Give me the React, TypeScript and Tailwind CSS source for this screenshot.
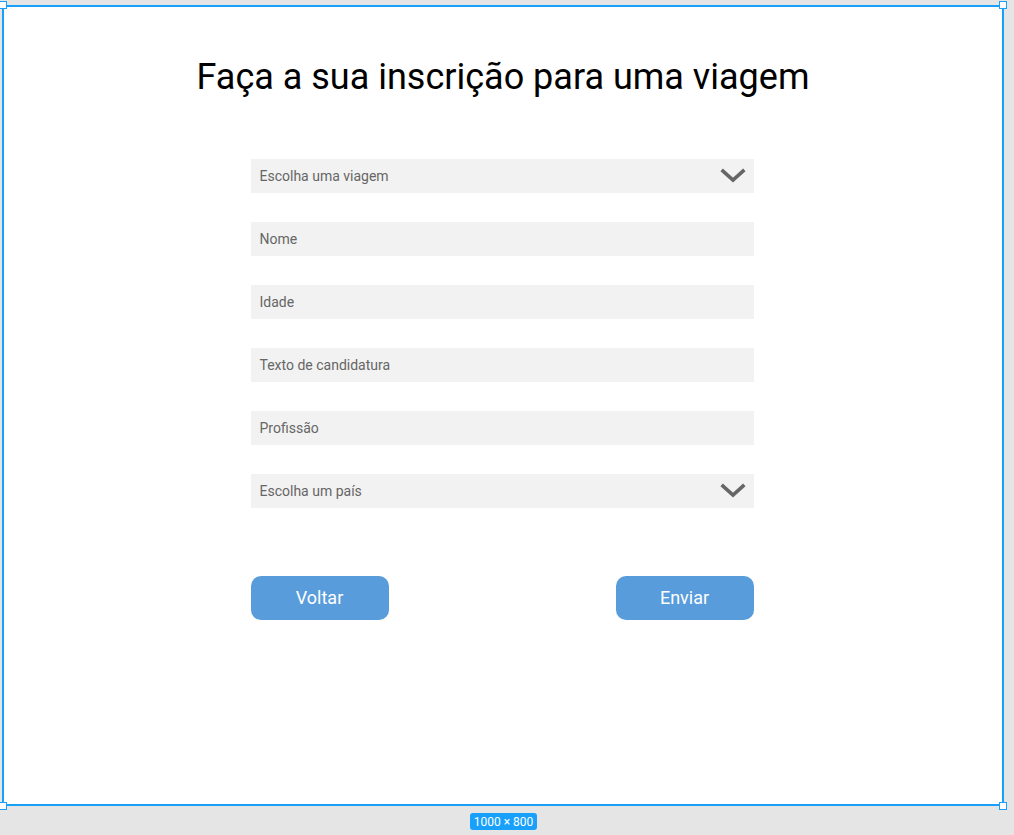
const font = { fontFamily: 'Roboto, "Liberation Sans", sans-serif' }

function Chevron() {
  return (
    <svg width="26" height="16" viewBox="0 0 26 16" className="shrink-0">
      <path d="M3 3 L13 12 L23 3" fill="none" stroke="#666666" strokeWidth="3.6" strokeLinecap="square" />
    </svg>
  )
}

function Field({ label, select }: { label: string; select?: boolean }) {
  return (
    <div className="flex h-[34px] items-center justify-between bg-[#f2f2f2] pl-[9px] pr-[8px]">
      <span className="text-[14px] text-[#666666]">{label}</span>
      {select && <Chevron />}
    </div>
  )
}

function Handle({ className }: { className: string }) {
  return <div className={`absolute h-[8px] w-[8px] border-[1.5px] border-[#18a0fb] bg-white ${className}`} />
}

export default function App() {
  return (
    <div className="relative h-[835px] w-[1014px] overflow-hidden bg-[#e5e5e5]" style={font}>
      <div className="absolute left-[2px] top-[5px] h-[801px] w-[1002px] border-2 border-[#18a0fb] bg-white">
        <div className="flex flex-col items-center">
          <h1 className="mt-[49px] text-[36px] font-normal leading-[42px] text-black">
            Faça a sua inscrição para uma viagem
          </h1>
          <div className="mr-[2px] mt-[61px] flex w-[503px] flex-col gap-[29px]">
            <Field label="Escolha uma viagem" select />
            <Field label="Nome" />
            <Field label="Idade" />
            <Field label="Texto de candidatura" />
            <Field label="Profissão" />
            <Field label="Escolha um país" select />
          </div>
          <div className="mr-[2px] mt-[68px] flex w-[503px] justify-between">
            <button className="h-[44px] w-[138px] rounded-[10px] bg-[#589cdc] pb-[2px] text-[18px] text-white">Voltar</button>
            <button className="h-[44px] w-[138px] rounded-[10px] bg-[#589cdc] pb-[2px] text-[18px] text-white">Enviar</button>
          </div>
        </div>
      </div>
      <Handle className="left-[-1px] top-[1px]" />
      <Handle className="left-[999px] top-[1px]" />
      <Handle className="left-[-1px] top-[802px]" />
      <Handle className="left-[999px] top-[802px]" />
      <div className="absolute left-[470px] top-[813px] flex h-[17px] w-[67px] items-center justify-center rounded-[3px] bg-[#18a0fb] text-[12px] text-white">
        1000 × 800
      </div>
    </div>
  )
}
